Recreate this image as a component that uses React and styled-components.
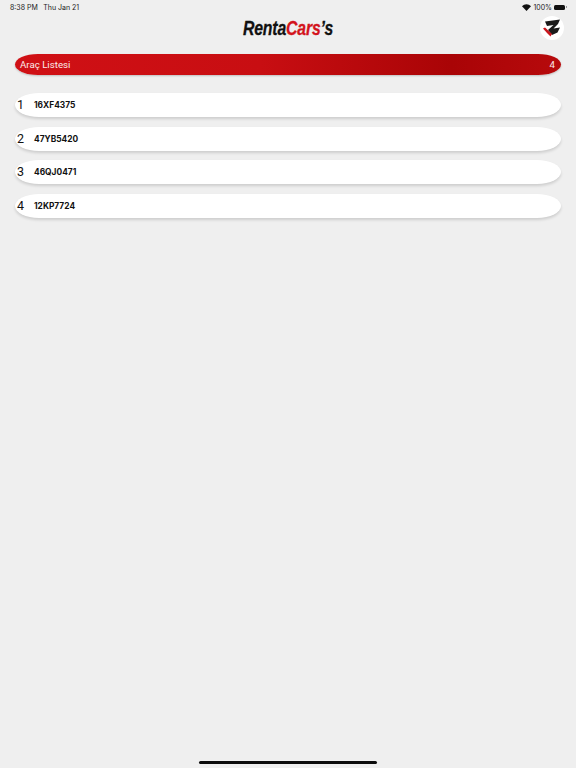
import styled, { createGlobalStyle } from "styled-components";

const GlobalStyle = createGlobalStyle`
	html, body {
		margin: 0;
		padding: 0;
		background: #efefef;
		font-family: "Roboto", "Liberation Sans", sans-serif;
	}
`;

const Page = styled.div`
	position: relative;
	display: flex;
	flex-direction: column;
	width: 576px;
	height: 768px;
	overflow: hidden;
	background: #efefef;
`;

const StatusBar = styled.div`
	display: flex;
	justify-content: space-between;
	align-items: center;
	height: 14px;
	padding: 0 9px 0 10px;
	font-family: "Inter", "Liberation Sans", sans-serif;
	font-size: 7px;
	color: #222;
`;

const StatusGroup = styled.div`
	display: flex;
	align-items: center;
	gap: ${(p) => p.$gap || 2}px;
`;

const Battery = styled.div`
	position: relative;
	width: 11px;
	height: 5px;
	margin-right: 2px;
	border-radius: 1.5px;
	background: #111;

	&::after {
		content: "";
		position: absolute;
		right: -2px;
		top: 1.5px;
		width: 1px;
		height: 2px;
		background: #999;
	}
`;

const Header = styled.div`
	display: flex;
	justify-content: center;
	align-items: center;
	position: relative;
	height: 28px;
	margin-bottom: 12px;
`;

const Logo = styled.div`
	font-family: "Liberation Sans", sans-serif;
	font-size: 20px;
	font-weight: 700;
	font-style: italic;
	color: #111;
	letter-spacing: -0.2px;
	transform: scaleX(0.79);
	-webkit-text-stroke: 0.3px currentColor;
	white-space: nowrap;

	span {
		color: #d3141c;
	}
`;

const Badge = styled.div`
	position: absolute;
	right: 12px;
	top: 2px;
	width: 24px;
	height: 24px;
	border-radius: 50%;
	background: #fff;
	display: flex;
	align-items: center;
	justify-content: center;
`;

const List = styled.div`
	display: flex;
	flex-direction: column;
	padding: 0 15px;
`;

const TitleBar = styled.div`
	display: flex;
	justify-content: space-between;
	align-items: center;
	height: 21px;
	padding: 0 6px 0 5px;
	margin-bottom: 18px;
	border-radius: 24px / 11px;
	background: linear-gradient(90deg, #d01015 0%, #c80e12 45%, #a90406 80%, #b70a0c 100%);
	box-shadow: 0 1px 2px rgba(0, 0, 0, 0.2);
	color: #fbeaea;
	font-size: 9.7px;
`;

const Row = styled.div`
	display: flex;
	align-items: center;
	height: 24px;
	margin-bottom: 9.67px;
	border-radius: 24px / 12px;
	background: #fff;
	box-shadow: 0 2px 3px rgba(0, 0, 0, 0.14);
`;

const RowIndex = styled.span`
	width: 19px;
	padding: 0 0 1px 2px;
	box-sizing: border-box;
	font-size: 12.5px;
	color: #111;
`;

const Plate = styled.span`
	font-family: "Inter", "Liberation Sans", sans-serif;
	font-size: 8.4px;
	font-weight: 700;
	color: #111;
`;

const HomeIndicator = styled.div`
	position: absolute;
	left: 199px;
	bottom: 4px;
	width: 178px;
	height: 3px;
	border-radius: 2px;
	background: #0c0c0c;
`;

const plates = ["16XF4375", "47YB5420", "46QJ0471", "12KP7724"];

const App = () => (
	<Page>
		<GlobalStyle />
		<StatusBar>
			<StatusGroup $gap={5.5}>
				<span>8:38 PM</span>
				<span>Thu Jan 21</span>
			</StatusGroup>
			<StatusGroup>
				<svg width="9" height="7" viewBox="0 0 18 14" fill="#111">
					<path d="M9 14 0 4.600C2.400 2 5.500.6 9 .6s6.600 1.400 9 4z" />
				</svg>
				<span>100%</span>
				<Battery />
			</StatusGroup>
		</StatusBar>
		<Header>
			<Logo>
				Renta<span>Cars</span>’s
			</Logo>
			<Badge>
				<svg width="20" height="20" viewBox="0 0 20 20">
					<path d="M3 3.500 18 1.500 16 6 11.500 10.500 18 9.500 15.500 14.500 10 17 6 12 11.500 7 5 8z" fill="#1a1a1a" />
					<path d="M1 10.500 3 9.500 10 16 8.500 18.500 5 15z" fill="#c9161d" />
				</svg>
			</Badge>
		</Header>
		<List>
			<TitleBar>
				<span>Araç Listesi</span>
				<span>{plates.length}</span>
			</TitleBar>
			{plates.map((plate, i) => (
				<Row key={plate}>
					<RowIndex>{i + 1}</RowIndex>
					<Plate>{plate}</Plate>
				</Row>
			))}
		</List>
		<HomeIndicator />
	</Page>
);

export default App;
